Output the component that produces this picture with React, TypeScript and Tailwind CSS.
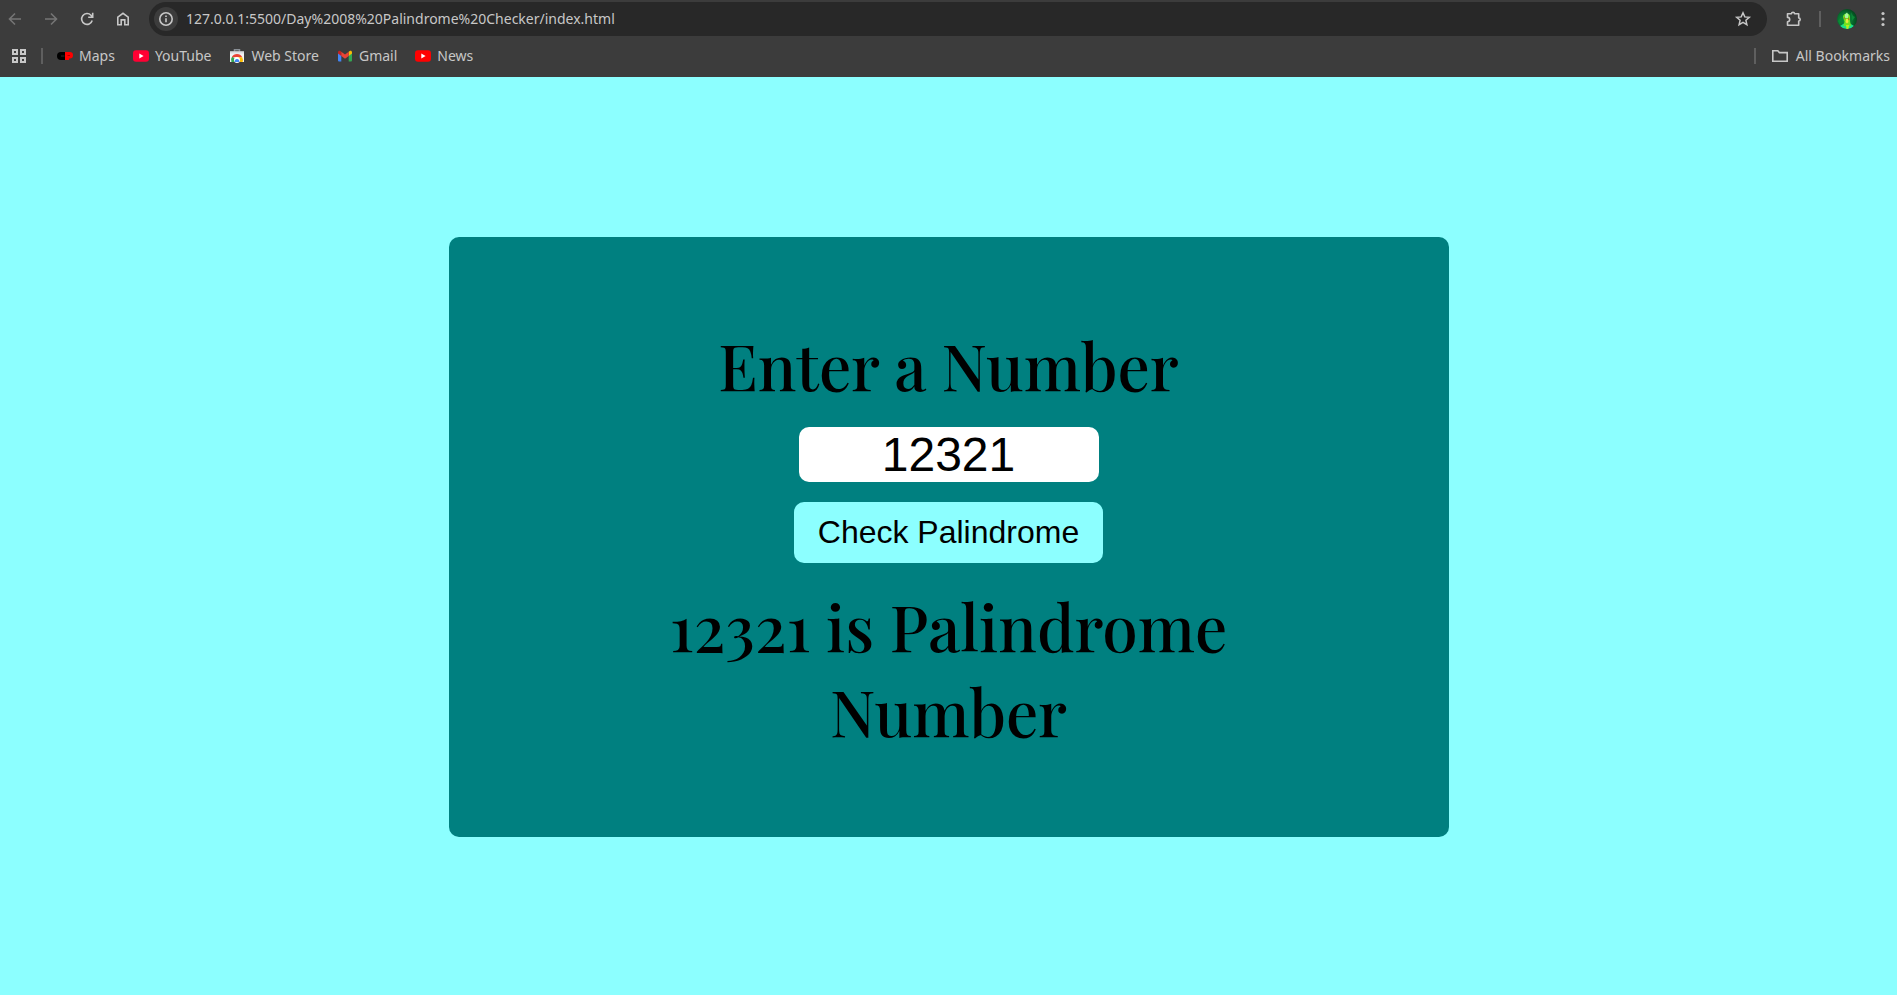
import { useState } from "react";
import type { ReactNode } from "react";

function Icon({ children, className = "" }: { children: ReactNode; className?: string }) {
  return (
    <svg viewBox="0 0 20 20" className={`size-5 shrink-0 ${className}`} fill="none" stroke="currentColor" strokeWidth="1.6" aria-hidden="true">
      {children}
    </svg>
  );
}

function YouTubeIcon({ color }: { color: string }) {
  return (
    <svg viewBox="0 0 16 16" className="size-4" aria-hidden="true">
      <rect x="0" y="2.2" width="16" height="11.6" rx="3" fill={color} />
      <path d="M6.3 5.6v4.8l4.3-2.4z" fill="#fff" />
    </svg>
  );
}

function MapsIcon() {
  return (
    <svg viewBox="0 0 16 16" className="size-4" aria-hidden="true">
      <path d="M8 4H4a4 4 0 0 0 0 8h4z" fill="#000" />
      <path d="M8 4h4.8a3.200 3.200 0 0 1 0 6.400H12V12H8z" fill="#f00" />
      <path d="M4 8h3.500" stroke="#2a2a2a" strokeWidth="1" />
      <path d="M10.500 7.500H13" stroke="#b00000" strokeWidth="1" />
    </svg>
  );
}

function StoreIcon() {
  return (
    <svg viewBox="0 0 16 16" className="size-4" aria-hidden="true">
      <path d="M5.500 3.500V1.700h5v1.800" fill="none" stroke="#8a9096" strokeWidth="1.500" />
      <path d="M1 3.500h14V14H1z" fill="#f1f3f4" />
      <path d="M1 3.500h14v2H1z" fill="#dadce0" />
      <path d="M2.400 14a5.600 5.600 0 0 1 .8-5.600L8 12v2z" fill="#34a853" />
      <path d="M2.800 9.200a5.800 5.800 0 0 1 10.400 0z" fill="#ea4335" />
      <path d="M8 9.200h5.200a5.600 5.600 0 0 1 .4 4.800H8z" fill="#fbbc04" />
      <circle cx="8" cy="12" r="3" fill="#fff" />
      <path d="M5.700 14a2.400 2.400 0 1 1 4.600 0z" fill="#4285f4" />
    </svg>
  );
}

function GmailIcon() {
  return (
    <svg viewBox="0 0 16 16" className="size-4" aria-hidden="true">
      <path d="M1 4.500l3.300 2.500v6.500H2a1 1 0 0 1-1-1z" fill="#4285f4" />
      <path d="M15 4.500l-3.300 2.500v6.500H14a1 1 0 0 0 1-1z" fill="#34a853" />
      <path d="M11.700 3.700l1-.7c1-.7 2.300 0 2.300 1.200v1.300L11.700 8z" fill="#fbbc04" />
      <path d="M4.300 3.700l-1-.7C2.300 2.300 1 3 1 4.200v1.300L4.300 8z" fill="#c5221f" />
      <path d="M4.300 3.700L8 6.500l3.700-2.800V8L8 10.800 4.300 8z" fill="#ea4335" />
    </svg>
  );
}

function Avatar() {
  return (
    <svg viewBox="0 0 20 20" className="size-5" aria-hidden="true">
      <defs>
        <radialGradient id="avatar-glow" cx="0.4" cy="0.55" r="0.6">
          <stop offset="0" stopColor="#12a03a" />
          <stop offset="0.6" stopColor="#087030" />
          <stop offset="1" stopColor="#04461d" />
        </radialGradient>
        <clipPath id="avatar-clip"><circle cx="10" cy="10" r="10" /></clipPath>
      </defs>
      <g clipPath="url(#avatar-clip)">
        <rect width="20" height="20" fill="url(#avatar-glow)" />
        <path d="M1 12l4-5 1 6-3 3zM14 3l2 4 2 1-3 4z" fill="#0a8a36" />
        <path d="M3 17l4-2.500h6l4 2.500-3 3H6z" fill="#1be08c" />
        <path d="M6 8c0-4 6-5 7-1v5l1 5H6.500l1-4.500z" fill="#6ee321" />
        <path d="M8 5.500l2-2 1.500 2.500-.5 3H8z" fill="#a8f7a0" />
        <path d="M7 8l1.500 1L8 11zM11.500 8l1 3-1.500-.5z" fill="#c4531b" />
        <path d="M9 10h2l.5 3-1.500 1.500L8.500 13z" fill="#e8e83a" />
        <path d="M9 16h3l-.5 4h-2z" fill="#b6f01c" />
      </g>
    </svg>
  );
}

const bookmarks = [
  { label: "Maps", icon: <MapsIcon /> },
  { label: "YouTube", icon: <YouTubeIcon color="#ff0033" /> },
  { label: "Web Store", icon: <StoreIcon /> },
  { label: "Gmail", icon: <GmailIcon /> },
  { label: "News", icon: <YouTubeIcon color="#ff0000" /> },
];

function Toolbar() {
  return (
    <div className="flex h-[38px] items-center">
      <div className="flex items-center gap-4 pr-4 pl-[5px]">
        <button aria-label="Back" className="text-[#757575]"><Icon><path d="M16 10H4.500M10 4.500L4.500 10l5.500 5.500" /></Icon></button>
        <button aria-label="Forward" className="text-[#757575]"><Icon><path d="M4 10h11.500M10 4.500l5.500 5.500-5.500 5.500" /></Icon></button>
        <button aria-label="Reload"><Icon><path d="M15.200 11.500A5.400 5.400 0 1 1 14 6.300l1.500 1.600M15.700 3.700v4.500h-4.500" /></Icon></button>
        <button aria-label="Home"><Icon><path d="M4.800 15.700V8.200L10 4.300l5.200 3.900v7.500h-3.400v-4.800H8.200v4.800z" /></Icon></button>
      </div>
      <div className="flex h-[34px] flex-1 items-center rounded-full bg-[#282828] pr-[14px] pl-[5px]">
        <button aria-label="Site information" className="flex size-6 items-center justify-center rounded-full bg-[#3c3c3c]">
          <Icon><circle cx="10" cy="10" r="6.200" /><path d="M10 9.200v4M10 6.500v1.500" /></Icon>
        </button>
        <input aria-label="Address" readOnly value="127.0.0.1:5500/Day%2008%20Palindrome%20Checker/index.html" className="ml-2 min-w-0 flex-1 bg-transparent text-sm text-[#c7c7c7] outline-none" />
        <button aria-label="Bookmark this page"><Icon><path strokeWidth="1.500" d="M10 3.800l1.800 4.100 4.500.4-3.400 3 1 4.400-3.900-2.300-3.900 2.300 1-4.400-3.400-3 4.500-.4z" /></Icon></button>
      </div>
      <div className="flex items-center gap-4 pr-1 pl-4">
        <button aria-label="Extensions"><Icon><path strokeLinejoin="round" d="M4.500 4.800H8.500a1.500 1.500 0 0 1 3 0h4.200V9a1.500 1.500 0 0 1 0 3v4.200H4.500v-3.400a2.200 2.200 0 0 0 0-4.400z" /></Icon></button>
        <span className="h-4 w-[2px] bg-[#5f5f5f]" />
        <button aria-label="Profile"><Avatar /></button>
        <button aria-label="Menu"><Icon><g fill="currentColor" stroke="none"><circle cx="10" cy="4.500" r="1.600" /><circle cx="10" cy="10" r="1.600" /><circle cx="10" cy="15.500" r="1.600" /></g></Icon></button>
      </div>
    </div>
  );
}

function BookmarksBar() {
  return (
    <nav aria-label="Bookmarks" className="flex h-9 items-center pr-[7px] pl-[9px] text-sm">
      <button aria-label="Apps"><Icon><path strokeWidth="2" d="M4 4h4v4H4zM12 4h4v4h-4zM4 12h4v4H4zM12 12h4v4h-4z" /></Icon></button>
      <span className="ml-3 h-4 w-[2px] bg-[#5f5f5f]" />
      <div className="ml-[14px] flex gap-[18px]">
        {bookmarks.map(({ label, icon }) => (
          <a key={label} href="#" className="flex items-center gap-[6px]">{icon}{label}</a>
        ))}
      </div>
      <span className="ml-auto h-4 w-[2px] bg-[#5f5f5f]" />
      <a href="#" className="ml-[14px] flex items-center gap-[6px]">
        <Icon><path d="M2.800 4.800h5l1.600 1.800h7.800v8.600H2.800z" /></Icon>
        All Bookmarks
      </a>
    </nav>
  );
}

function describe(value: string) {
  const palindrome = value === [...value].reverse().join("");
  return `${value} is ${palindrome ? "" : "not "}Palindrome Number`;
}

export default function App() {
  const [value, setValue] = useState("12321");
  const [checked, setChecked] = useState("12321");

  return (
    <div className="flex min-h-screen flex-col bg-[#8cffff]">
      <header className="h-[77px] bg-[#3c3c3c] font-['Noto_Sans',sans-serif] text-[#c7c7c7]">
        <Toolbar />
        <BookmarksBar />
      </header>
      <main className="flex flex-1 items-center justify-center pt-0.5 text-black">
        <form
          className="flex min-h-[600px] w-full max-w-[1000px] flex-col items-center justify-center gap-5 rounded-[10px] bg-[#008080] px-[200px] text-center"
          onSubmit={(event) => {
            event.preventDefault();
            setChecked(value);
          }}
        >
          <label htmlFor="number" className="font-['Playfair_Display','Liberation_Serif',serif] text-[64px] leading-[85px] font-medium">
            Enter a Number
          </label>
          <input
            id="number"
            value={value}
            onChange={(event) => setValue(event.target.value)}
            className="h-[55px] w-[300px] rounded-[10px] bg-white text-center font-['Liberation_Sans',sans-serif] text-5xl outline-none"
          />
          <button type="submit" className="rounded-[10px] bg-[#8cffff] px-6 py-3 font-['Liberation_Sans',sans-serif] text-[32px] leading-[37px]">
            Check Palindrome
          </button>
          <output htmlFor="number" className="block font-['Playfair_Display','Liberation_Serif',serif] text-[64px] leading-[85px] font-medium">
            {describe(checked)}
          </output>
        </form>
      </main>
    </div>
  );
}
